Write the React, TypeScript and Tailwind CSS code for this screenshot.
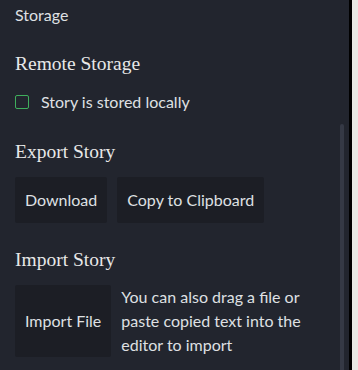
export default function App() {
  const sans = "font-['Lato','Liberation_Sans',sans-serif]";
  const serif = "font-['Liberation_Serif',serif]";

  return (
    <div className="flex h-[370px] w-[358px] overflow-hidden">
      {/* panel */}
      <div className={`relative h-full w-[349px] bg-[#22252e] px-[15px] text-[#dfe0e3] ${sans}`}>
        <p className="pt-[3px] text-[16px] leading-[24px]">Storage</p>

        <h2 className={`mt-[23px] text-[19.5px] leading-[28px] text-[#e8e8e8] ${serif}`}>Remote Storage</h2>
        <label className="mt-[12px] flex items-center gap-[12px] text-[16px] leading-[24px]">
          <span className="h-[14px] w-[14px] rounded-[2px] border border-[#3fae5c]" />
          Story is stored locally
        </label>

        <h2 className={`mt-[24px] text-[19.5px] leading-[28px] text-[#e8e8e8] ${serif}`}>Export Story</h2>
        <div className="mt-[11px] flex gap-[10px]">
          <button className="h-[46px] rounded-[2px] bg-[#1c1e25] px-[10px] text-[16px]">Download</button>
          <button className="h-[46px] rounded-[2px] bg-[#1c1e25] px-[10px] text-[16px]">Copy to Clipboard</button>
        </div>

        <h2 className={`mt-[23px] text-[19.5px] leading-[28px] text-[#e8e8e8] ${serif}`}>Import Story</h2>
        <div className="mt-[11px] flex gap-[10px]">
          <button className="h-[72px] shrink-0 rounded-[2px] bg-[#1c1e25] px-[10px] text-[16px]">Import File</button>
          <p className="w-[212px] text-[16px] leading-[24px]">
            You can also drag a file or paste copied text into the editor to import
          </p>
        </div>

        {/* scrollbar thumb */}
        <div className="absolute right-[5px] top-[124px] h-[260px] w-[4px] rounded-t-[2px] bg-[#353945]" />
      </div>
      <div className="h-full w-[3px] bg-black" />
      <div className="h-full flex-1 bg-[#e8e8e4]" />
    </div>
  );
}
